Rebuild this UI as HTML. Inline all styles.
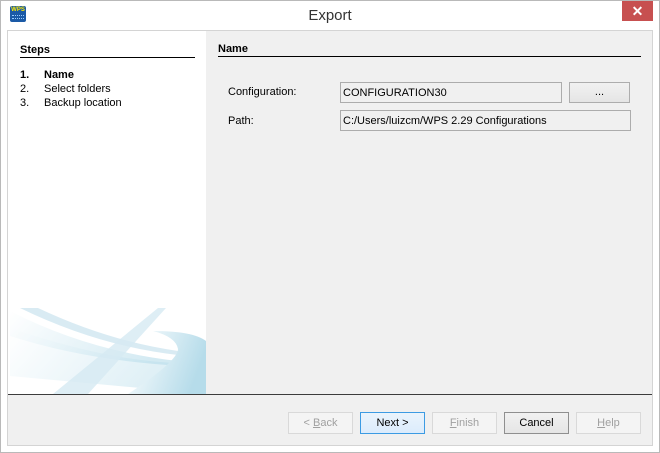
<!DOCTYPE html>
<html><head><style>
*{margin:0;padding:0;box-sizing:border-box}
body{width:660px;height:453px;background:#fff;font-family:"Liberation Sans",sans-serif;font-size:11px;color:#000;position:relative;overflow:hidden}
.a{position:absolute}
.btn{position:absolute;top:412px;width:65px;height:22px;border:1px solid #adadad;background:linear-gradient(#f1f1f1,#e5e5e5);text-align:center;line-height:20px;font-size:11px}
.dis{border-color:#d9d9d9;background:#f4f4f4;color:#a0a0a0}
.inp{position:absolute;height:21px;border:1px solid #acacac;background:#f0f0f0;padding-left:2px;line-height:20px}
</style></head><body>
<div class="a" style="left:0;top:0;width:660px;height:453px;border:1px solid #b9b9b9"></div>
<div class="a" style="left:10px;top:6px;width:16px;height:16px;background:#1b5aa6;border-radius:2px;color:#ffea00;font-size:6px;font-weight:bold;line-height:9px;text-align:center">WPS</div>
<div class="a" style="left:12px;top:15px;width:12px;height:4px;border-top:1px dotted #9cf;border-bottom:1px dotted #9cf"></div>
<div class="a" style="left:0;top:7px;width:660px;text-align:center;font-size:15px;color:#333">Export</div>
<div class="a" style="left:622px;top:1px;width:31px;height:20px;background:#c75050;color:#fff;text-align:center;font-size:14px;line-height:20px;font-weight:bold">✕</div>
<div class="a" style="left:7px;top:30px;width:646px;height:416px;background:#f0f0f0;border:1px solid #d4d4d4"></div>
<div class="a" style="left:8px;top:31px;width:198px;height:363px;background:#fff;overflow:hidden">
<svg width="198" height="363" style="position:absolute;left:0;top:0">
<defs><linearGradient id="g" x1="0" x2="1" y1="0" y2="0.3"><stop offset="0" stop-color="#fff"/><stop offset="1" stop-color="#b6dcea"/></linearGradient></defs>
<path d="M2 297 Q100 330 170 332 L198 333 L198 363 L2 345Z" fill="url(#g)" opacity="0.5"/>
<path d="M2 280 Q80 320 170 330 L175 335 Q80 330 2 305Z" fill="url(#g)" opacity="0.6"/>
<path d="M12 277 L30 277 Q100 310 170 320 L170 324 Q90 315 12 277Z" fill="#cfe6f0" opacity="0.8"/>
<path d="M150 277 L158 277 L80 363 L45 363Z" fill="#d6eaf3" opacity="0.8"/>
<path d="M145 300 Q185 300 198 310 L198 363 L120 363 Q170 330 170 318 Q168 306 145 300Z" fill="url(#g)"/>
</svg></div>
<div class="a" style="left:20px;top:44px;font-weight:bold">Steps</div>
<div class="a" style="left:20px;top:57px;width:175px;border-top:1px solid #000"></div>
<div class="a" style="left:20px;top:69px;font-weight:bold">1.</div><div class="a" style="left:44px;top:69px;font-weight:bold">Name</div>
<div class="a" style="left:20px;top:83px">2.</div><div class="a" style="left:44px;top:83px">Select folders</div>
<div class="a" style="left:20px;top:97px">3.</div><div class="a" style="left:44px;top:97px">Backup location</div>
<div class="a" style="left:218px;top:43px;font-weight:bold">Name</div>
<div class="a" style="left:218px;top:56px;width:423px;border-top:1px solid #000"></div>
<div class="a" style="left:228px;top:86px">Configuration:</div>
<div class="inp" style="left:340px;top:82px;width:222px">CONFIGURATION30</div>
<div class="btn" style="left:569px;top:82px;width:61px;height:21px;line-height:18px">...</div>
<div class="a" style="left:228px;top:115px">Path:</div>
<div class="inp" style="left:340px;top:110px;width:291px">C:/Users/luizcm/WPS 2.29 Configurations</div>
<div class="a" style="left:8px;top:394px;width:644px;border-top:1px solid #3c3c3c"></div>
<div class="btn dis" style="left:288px">&lt; <u>B</u>ack</div>
<div class="btn" style="left:360px;border-color:#3c9be3;background:linear-gradient(#eaf4fc,#dcecfc)">Next &gt;</div>
<div class="btn dis" style="left:432px"><u>F</u>inish</div>
<div class="btn" style="left:504px;border-color:#8f8f8f">Cancel</div>
<div class="btn dis" style="left:576px"><u>H</u>elp</div>
</body></html>
